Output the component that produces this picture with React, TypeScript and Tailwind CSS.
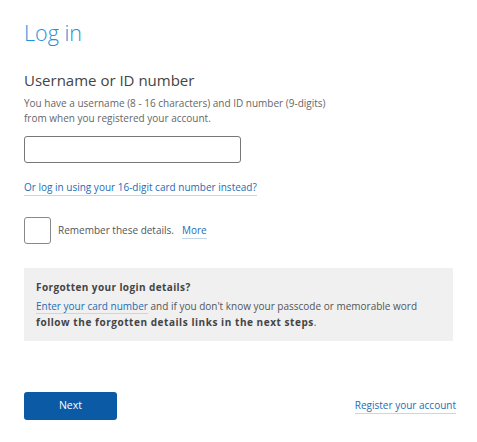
export default function App() {
  return (
    <div className="min-h-[442px] w-[477px] bg-white font-['Open_Sans',sans-serif] text-[#555]">
      <div className="pl-6 pr-5 pt-[19px]">
        <h1 className="text-[21.5px] font-light leading-7 text-[#1e93d6]">Log in</h1>

        <h2 className="mt-[23px] text-[15px] leading-5 text-[#444]">Username or ID number</h2>
        <p className="mt-[6px] text-[10px] leading-[15px] text-[#666]">
          You have a username (8 - 16 characters) and ID number (9-digits)
          <br />
          from when you registered your account.
        </p>

        <input
          type="text"
          className="mt-[10px] block h-[27px] w-[217px] rounded-[3px] border border-[#777] px-2 text-[11px] outline-none"
        />

        <div className="mt-[14px] leading-4">
          <a href="#" className="border-b border-[#c4d8ec] pb-px text-[10px] text-[#1e6cb5]">
            Or log in using your 16-digit card number instead?
          </a>
        </div>

        <div className="mt-[22px] flex items-center gap-[7px]">
          <div className="h-[27px] w-[27px] rounded-[3px] border border-[#888] bg-white" />
          <span className="text-[10px] text-[#555]">Remember these details.</span>
          <a href="#" className="ml-[1px] border-b border-[#c4d8ec] text-[10px] text-[#1e6cb5]">
            More
          </a>
        </div>

        <div className="mt-[24px] w-[429px] bg-[#f0f0f0] px-3 pb-[10px] pt-[11px] text-[10px] leading-[16.5px] text-[#555]">
          <p className="font-bold tracking-[0.4px] text-[#444]">Forgotten your login details?</p>
          <p className="mt-[2px]">
            <a href="#" className="border-b border-[#c4d8ec] text-[#1e6cb5]">
              Enter your card number
            </a>{" "}
            and if you don't know your passcode or memorable word
            <br />
            <span className="font-bold tracking-[0.55px] text-[#444]">
              follow the forgotten details links in the next steps
            </span>
            .
          </p>
        </div>

        <div className="mt-[51px] flex items-center justify-between pr-[1px]">
          <button className="h-[28px] w-[93px] rounded-[3px] bg-[#0b5aa5] text-[10.5px] text-white">
            Next
          </button>
          <a href="#" className="border-b border-[#c4d8ec] text-[10px] text-[#1e6cb5]">
            Register your account
          </a>
        </div>
      </div>
    </div>
  );
}
